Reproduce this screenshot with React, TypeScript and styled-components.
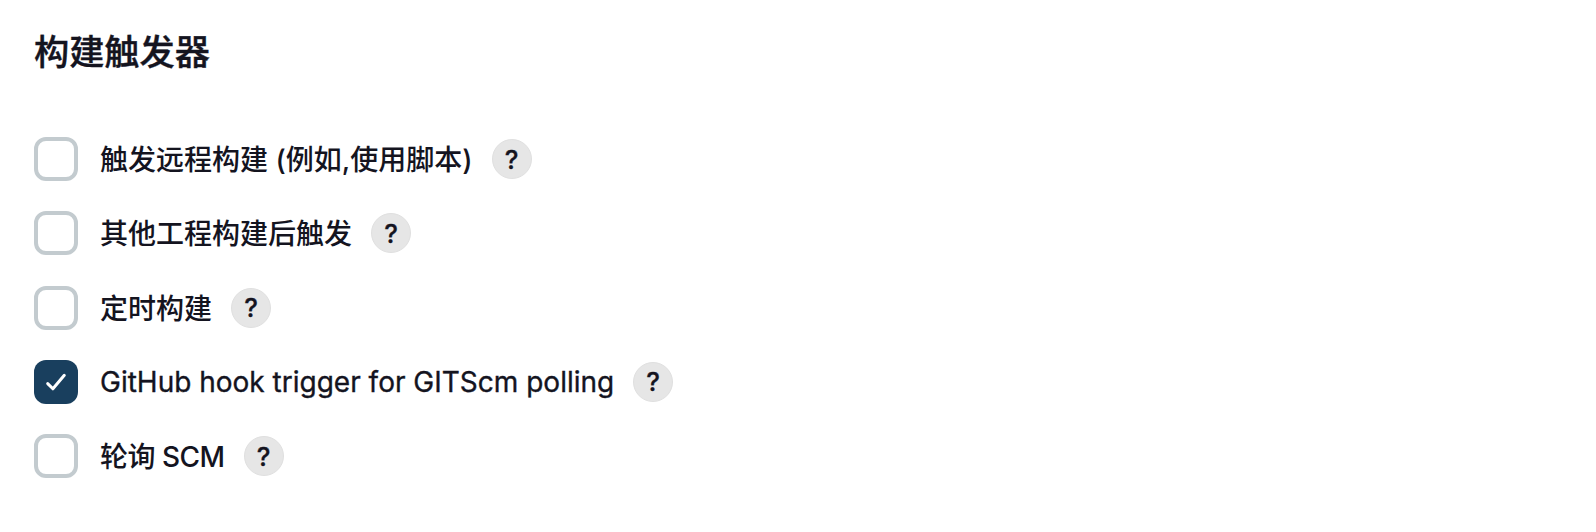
import React from "react";
import styled, { createGlobalStyle } from "styled-components";

const GlobalStyle = createGlobalStyle`
  body { margin: 0; background: #fff; }
`;
const Section = styled.section`
  box-sizing: border-box;
  height: 532px;
  padding: 31px 34px 0;
  color: #14141f;
  font-family: Inter, "Noto Sans CJK SC", sans-serif;
`;
const Heading = styled.h2`
  margin: 0 0 63px;
  font-size: 35.2px;
  line-height: 43px;
  font-weight: 500;
  -webkit-text-stroke: 0.4px currentColor;
`;
const List = styled.div`
  display: flex;
  flex-direction: column;
  gap: 30.3px;
`;
const Row = styled.div`
  display: flex;
  align-items: center;
  height: 44px;
`;
const Box = styled.span<{ $checked?: boolean }>`
  box-sizing: border-box;
  display: flex;
  align-items: center;
  justify-content: center;
  width: 44px;
  height: 44px;
  border-radius: 12px;
  border: ${(p) => (p.$checked ? "0" : "4px solid #c3cbcf")};
  background: ${(p) => (p.$checked ? "#193f5e" : "#fff")};
`;
const Label = styled.span<{ $latin?: boolean; $tracking?: number }>`
  margin-left: 22px;
  padding-top: ${(p) => (p.$latin ? 0 : 2)}px;
  font-size: 28px;
  line-height: 42px;
  font-weight: ${(p) => (p.$latin ? 400 : 500)};
  -webkit-text-stroke: ${(p) => (p.$latin ? "0.35px currentColor" : "0")};
  letter-spacing: ${(p) => p.$tracking ?? 0}px;
  white-space: nowrap;
`;
const Help = styled.span`
  box-sizing: border-box;
  display: flex;
  align-items: center;
  justify-content: center;
  width: 40px;
  height: 40px;
  margin-left: 19px;
  border: 1px solid #e0e0e0;
  border-radius: 50%;
  background: #e6e6e6;
  padding-top: 1px;
  font-size: 26px;
  line-height: 38px;
  font-weight: 500;
  -webkit-text-stroke: 0.3px currentColor;
`;

function CheckMark() {
  return (
    <svg width="44" height="44" viewBox="0 0 44 44" fill="none">
      <path d="M13.7 23.6L18.9 28.8L30.3 15.3" stroke="#fff" strokeWidth="3" strokeLinecap="round" strokeLinejoin="round" />
    </svg>
  );
}

const items = [
  { text: "触发远程构建 (例如,使用脚本)" },
  { text: "其他工程构建后触发" },
  { text: "定时构建" },
  { text: "GitHub hook trigger for GITScm polling", checked: true, latin: true },
  { text: "轮询 SCM", tracking: -0.5 },
];

export default function App() {
  return (
    <Section>
      <GlobalStyle />
      <Heading>构建触发器</Heading>
      <List>
        {items.map((i) => (
          <Row key={i.text}>
            <Box $checked={i.checked}>{i.checked && <CheckMark />}</Box>
            <Label $latin={i.latin} $tracking={i.tracking}>
              {i.text}
            </Label>
            <Help>?</Help>
          </Row>
        ))}
      </List>
    </Section>
  );
}
